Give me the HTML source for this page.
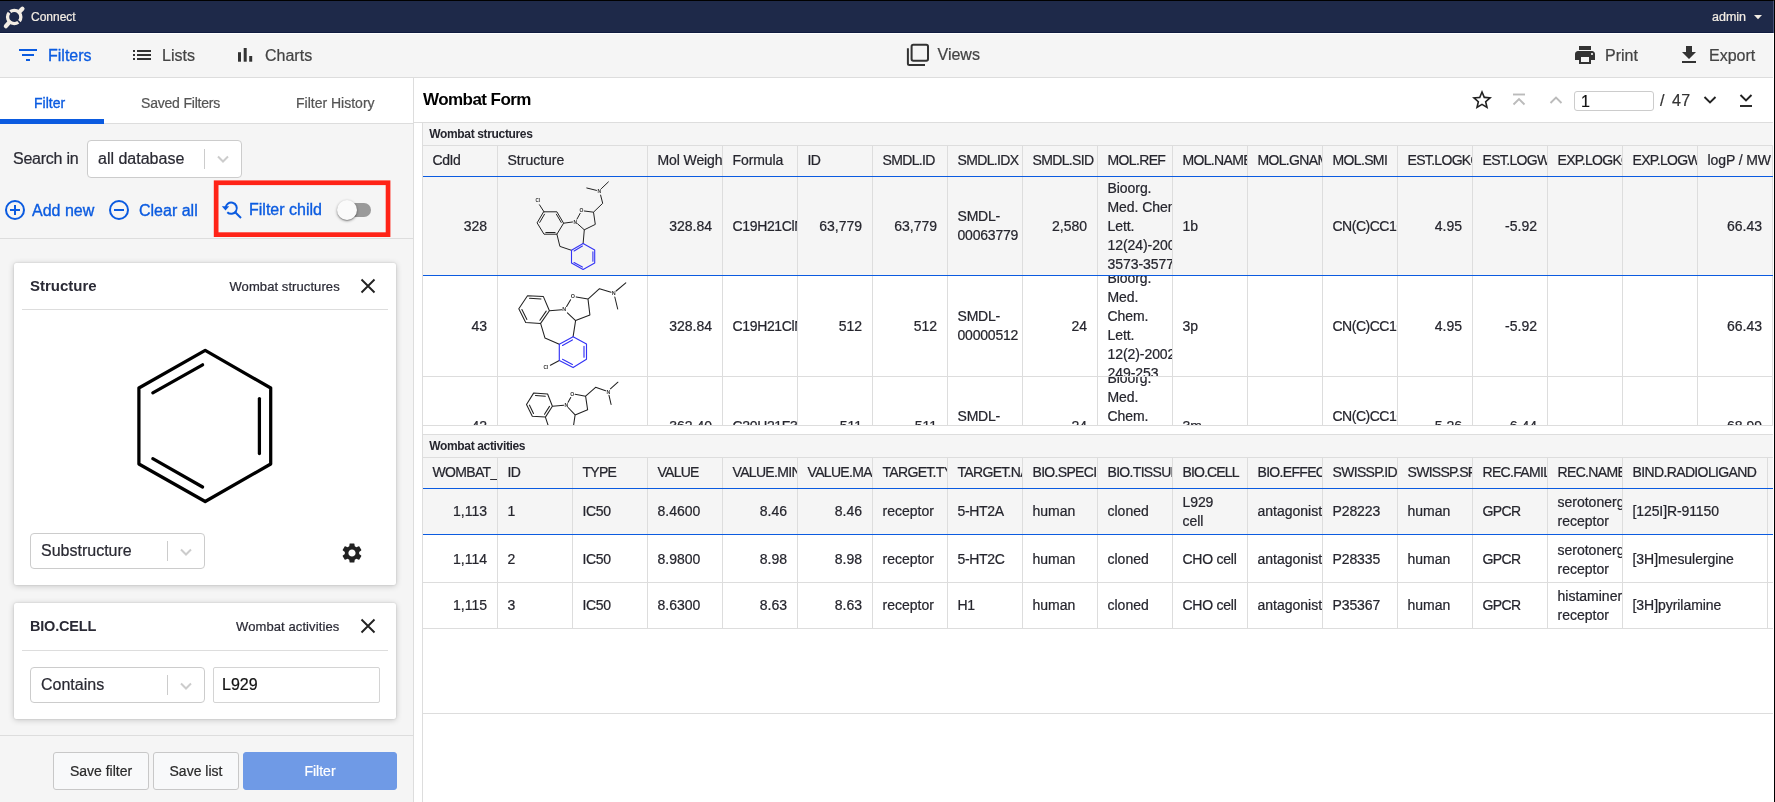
<!DOCTYPE html>
<html>
<head>
<meta charset="utf-8">
<title>Connect</title>
<style>
*{box-sizing:border-box;}
html,body{margin:0;padding:0;}
body{width:1775px;height:802px;overflow:hidden;background:#fff;font-family:"Liberation Sans",sans-serif;color:#26262e;position:relative;}
#wrap{position:absolute;left:0;top:0;width:1775px;height:802px;will-change:transform;-webkit-text-stroke-width:0.22px;}
.abs{position:absolute;}
#nav{left:0;top:0;width:1773px;height:33px;background:#1e2949;border-top:1px solid #000;border-bottom:1px solid #101c40;}
#nav .brand{left:31px;top:8px;font-size:12px;color:#f3ede4;line-height:16px;}
#nav .user{left:1712px;top:8px;font-size:12.5px;color:#f3ede4;line-height:16px;}
#toolbar{left:0;top:33px;width:1773px;height:45px;background:#f5f5f5;border-bottom:1px solid #ddd;box-shadow:inset 0 1px 0 #fff;}
.tb{font-size:16px;line-height:20px;color:#444;top:13px;white-space:nowrap;}
.tb.act{color:#0b5be0;-webkit-text-stroke-width:0.3px;}
#left{left:0;top:78px;width:414px;height:724px;background:#f5f5f5;border-right:1px solid #ddd;}
#tabs{left:0;top:0;width:413px;height:46px;background:#fff;border-bottom:1px solid #ddd;}
.tab{top:16px;font-size:14px;line-height:18px;color:#555;white-space:nowrap;}
.tab.act{color:#0b5be0;-webkit-text-stroke-width:0.35px;}
.sel{background:#fff;border:1px solid #ccc;border-radius:4px;}
.sel .sep{position:absolute;width:1px;background:#ccc;}
.sel .tx{position:absolute;font-size:16px;line-height:20px;color:#2a2a33;white-space:nowrap;}
.link{font-size:16px;line-height:20px;color:#0b5be0;white-space:nowrap;-webkit-text-stroke-width:0.35px;}
.card{background:#fff;border-radius:2px;box-shadow:0 1px 6px rgba(0,0,0,.2),0 0 1.5px rgba(0,0,0,.2);}
.card .ttl{-webkit-text-stroke-width:0;position:absolute;left:16px;font-weight:bold;font-size:15px;line-height:20px;color:#2a2a35;white-space:nowrap;}
.card .sub{position:absolute;font-size:13px;line-height:18px;color:#2a2a35;white-space:nowrap;}
.card .div{position:absolute;left:8px;right:8px;height:1px;background:#ddd;}
.btn{border:1px solid #c8c8c8;border-radius:3px;background:#f8f9fa;font-size:14px;line-height:36px;text-align:center;color:#2a2a2a;height:38px;white-space:nowrap;}
#right{left:414px;top:78px;width:1359px;height:724px;background:#fff;}
.band{-webkit-text-stroke-width:0;position:absolute;left:422px;width:1351px;background:#f5f5f5;font-weight:bold;font-size:12px;color:#26262e;line-height:22px;padding-left:6.3px;border-left:1px solid #ddd;border-bottom:1px solid #ddd;letter-spacing:-0.35px;white-space:nowrap;}
.grid{position:absolute;left:422px;width:1351px;overflow:hidden;font-size:14px;color:#26262e;}
.hrow{position:absolute;left:0;top:0;width:1351px;height:31px;background:#f5f5f5;border-bottom:1px solid #0b5be0;}
.hc{position:absolute;top:0;height:30px;line-height:29px;padding-left:9.5px;white-space:nowrap;overflow:hidden;border-left:1px solid #ddd;font-size:14px;color:#26262e;}
.row{position:absolute;left:0;width:1351px;border-bottom:1px solid #ddd;background:#fff;overflow:hidden;}
.row.selr{background:#f5f5f5;border-bottom:1px solid #0b5be0;}
.c{position:absolute;top:0;bottom:0;border-left:1px solid #ddd;padding:0 10px 0 9.5px;overflow:hidden;display:flex;align-items:center;line-height:19px;font-size:14px;white-space:nowrap;}
.c.r{justify-content:flex-end;text-align:right;}
.c>div{flex:none;}
</style>
</head>
<body>
<div id="wrap">

<div id="nav" class="abs">
  <svg class="abs" style="left:2px;top:2px" width="26" height="28" viewBox="0 0 26 28">
    <g fill="none" stroke="#f3ede4" stroke-linecap="round">
      <circle cx="12.2" cy="14" r="6.65" stroke-width="3.3" stroke-dasharray="19.29 1.6" stroke-dashoffset="14.87" stroke-linecap="butt"/>
      <path d="M17.4 8.8 L20.4 5.7" stroke-width="4.3"/>
      <path d="M7.2 19.4 L3.9 23.1" stroke-width="4.3"/>
    </g>
  </svg>
  <div class="abs brand">Connect</div>
  <div class="abs user">admin</div>
  <svg class="abs" style="left:1753px;top:13px" width="10" height="6" viewBox="0 0 10 6"><path d="M1 1 L9 1 L5 5.2 Z" fill="#f3ede4"/></svg>
</div>
<div id="toolbar" class="abs">
  <svg class="abs" style="left:18px;top:13px" width="20" height="18" viewBox="0 0 20 18"><g fill="#0b5be0"><rect x="1" y="3" width="18" height="2"/><rect x="4" y="8" width="12" height="2"/><rect x="8" y="13" width="4" height="2"/></g></svg>
  <div class="abs tb act" style="left:48px;">Filters</div>
  <svg class="abs" style="left:132px;top:13px" width="20" height="18" viewBox="0 0 20 18"><g fill="#333"><rect x="1" y="4" width="2" height="2"/><rect x="1" y="8" width="2" height="2"/><rect x="1" y="12" width="2" height="2"/><rect x="5" y="4" width="14" height="2"/><rect x="5" y="8" width="14" height="2"/><rect x="5" y="12" width="14" height="2"/></g></svg>
  <div class="abs tb" style="left:162px;">Lists</div>
  <svg class="abs" style="left:236px;top:13px" width="18" height="18" viewBox="0 0 18 18"><g fill="#333"><rect x="2" y="6.2" width="3" height="9.5"/><rect x="7.7" y="2" width="3" height="13.7"/><rect x="13.2" y="10" width="3" height="5.7"/></g></svg>
  <div class="abs tb" style="left:265px;">Charts</div>
  <svg class="abs" style="left:905px;top:9px" width="26" height="26" viewBox="0 0 26 26"><g fill="none" stroke="#333" stroke-width="2"><rect x="6.6" y="2.7" width="16.4" height="16" rx="1.7"/><path d="M2.9 6.2 V21.6 a1.5 1.5 0 0 0 1.5 1.5 H20"/></g></svg>
  <div class="abs tb" style="left:937.5px;top:12px">Views</div>
  <svg class="abs" style="left:1573px;top:10px" width="24" height="24" viewBox="0 0 24 24"><path fill="#333" d="M19 8H5c-1.66 0-3 1.34-3 3v6h4v4h12v-4h4v-6c0-1.66-1.34-3-3-3zm-3 11H8v-5h8v5zm3-7c-.55 0-1-.45-1-1s.45-1 1-1 1 .45 1 1-.45 1-1 1zm-1-9H6v4h12V3z"/></svg>
  <div class="abs tb" style="left:1605px;">Print</div>
  <svg class="abs" style="left:1677px;top:10px" width="24" height="24" viewBox="0 0 24 24"><path fill="#333" d="M19 9h-4V3H9v6H5l7 7 7-7zM5 18v2h14v-2H5z"/></svg>
  <div class="abs tb" style="left:1709px;">Export</div>
</div><div id="left" class="abs">
  <div id="tabs" class="abs">
    <div class="abs tab act" style="left:34px;">Filter</div>
    <div class="abs tab" style="left:141px;letter-spacing:-0.2px">Saved Filters</div>
    <div class="abs tab" style="left:296px;">Filter History</div>
    <div class="abs" style="left:0;top:41px;width:104px;height:5px;background:#0b5be0;"></div>
  </div><div class="abs" style="left:13px;top:71px;font-size:16px;line-height:20px;color:#2a2a33;white-space:nowrap;letter-spacing:-0.25px">Search in</div><div class="abs sel" style="left:87px;top:62px;width:155px;height:38px;"><div class="tx" style="left:10px;top:8px">all database</div><div class="sep" style="left:116px;top:8px;height:20px"></div><svg class="abs" style="left:128px;top:13px" width="14" height="10" viewBox="0 0 14 10"><path d="M2 2.5 L7 7.5 L12 2.5" fill="none" stroke="#ccc" stroke-width="2"/></svg></div><svg class="abs" style="left:4px;top:121px" width="22" height="22" viewBox="0 0 22 22"><circle cx="11" cy="11" r="9" fill="none" stroke="#0b5be0" stroke-width="2"/><path d="M6 11 H16 M11 6 V16" stroke="#0b5be0" stroke-width="2" fill="none"/></svg><div class="abs link" style="left:32px;top:123px">Add new</div><svg class="abs" style="left:108px;top:121px" width="22" height="22" viewBox="0 0 22 22"><circle cx="11" cy="11" r="9" fill="none" stroke="#0b5be0" stroke-width="2"/><path d="M6 11 H16" stroke="#0b5be0" stroke-width="2" fill="none"/></svg><div class="abs link" style="left:139px;top:123px">Clear all</div><svg class="abs" style="left:210px;top:100px" width="190" height="64" viewBox="0 0 190 64"><rect x="6.15" y="4.75" width="171.9" height="51.9" fill="none" stroke="#ff2317" stroke-width="4.7"/></svg><svg class="abs" style="left:221px;top:122px" width="22" height="20" viewBox="0 0 22 20"><g fill="none" stroke="#0b5be0" stroke-width="2"><path d="M4.6 8.2 A5.6 5.6 0 1 1 6.3 12.2"/><path d="M14.2 12.2 L20 18"/></g><path d="M0.8 6.2 L8.2 6.2 L4.5 10.4 Z" fill="#0b5be0"/></svg><div class="abs link" style="left:249px;top:122px">Filter child</div><div class="abs" style="left:340px;top:125px;width:31px;height:14px;border-radius:7px;background:#9a9a9a"></div><div class="abs" style="left:337px;top:122px;width:20px;height:20px;border-radius:10px;background:#fafafa;box-shadow:0 1px 3px rgba(0,0,0,.4),0 1px 1px rgba(0,0,0,.2)"></div><div class="abs" style="left:0;top:160px;width:413px;height:1px;background:#ddd"></div><div class="abs card" style="left:14px;top:185px;width:382px;height:322px"><div class="ttl" style="top:13px">Structure</div><div class="sub" style="left:215.5px;top:15px;letter-spacing:0.08px">Wombat structures</div><svg class="abs" style="left:346px;top:14.5px" width="16" height="16" viewBox="0 0 16 16"><path d="M1.5 1.5 L14.5 14.5 M14.5 1.5 L1.5 14.5" fill="none" stroke="#222" stroke-width="1.9"/></svg><div class="div" style="top:46px"></div><svg class="abs" style="left:0;top:0" width="382" height="322" viewBox="0 0 382 322"><g fill="none" stroke="#000" stroke-width="3.25" stroke-linejoin="round" stroke-linecap="round"><path d="M191.2 87.4 L256.7 125 L256.7 201 L191.2 238.5 L124.9 201 L124.9 125 Z"/><path d="M138.8 129.8 L188.6 101.8"/><path d="M245.4 135.5 L245.4 190.5"/><path d="M138.8 195.7 L188.6 224"/></g></svg><div class="abs sel" style="left:16px;top:270px;width:175px;height:36px;"><div class="tx" style="left:10px;top:7px">Substructure</div><div class="sep" style="left:136px;top:7px;height:20px"></div><svg class="abs" style="left:148px;top:13px" width="14" height="10" viewBox="0 0 14 10"><path d="M2 2.5 L7 7.5 L12 2.5" fill="none" stroke="#ccc" stroke-width="2"/></svg></div><svg class="abs" style="left:326px;top:278px" width="24" height="24" viewBox="0 0 24 24"><path fill="#222" d="M19.14 12.94c.04-.3.06-.61.06-.94 0-.32-.02-.64-.07-.94l2.03-1.58a.49.49 0 0 0 .12-.61l-1.92-3.32a.488.488 0 0 0-.59-.22l-2.39.96c-.5-.38-1.03-.7-1.62-.94l-.36-2.54a.484.484 0 0 0-.48-.41h-3.84c-.24 0-.43.17-.47.41l-.36 2.54c-.59.24-1.13.57-1.62.94l-2.39-.96c-.22-.08-.47 0-.59.22L2.74 8.87c-.12.21-.08.47.12.61l2.03 1.58c-.05.3-.09.63-.09.94s.02.64.07.94l-2.03 1.58a.49.49 0 0 0-.12.61l1.92 3.32c.12.22.37.29.59.22l2.39-.96c.5.38 1.03.7 1.62.94l.36 2.54c.05.24.24.41.48.41h3.84c.24 0 .44-.17.47-.41l.36-2.54c.59-.24 1.13-.56 1.62-.94l2.39.96c.22.08.47 0 .59-.22l1.92-3.32c.12-.22.07-.47-.12-.61l-2.01-1.58zM12 15.6c-1.98 0-3.6-1.62-3.6-3.6s1.62-3.6 3.6-3.6 3.6 1.62 3.6 3.6-1.62 3.6-3.6 3.6z"/></svg></div><div class="abs card" style="left:14px;top:525px;width:382px;height:116px"><div class="ttl" style="top:13px;font-size:14.5px;letter-spacing:-0.2px">BIO.CELL</div><div class="sub" style="left:222px;top:15px;letter-spacing:0.1px">Wombat activities</div><svg class="abs" style="left:346px;top:14.5px" width="16" height="16" viewBox="0 0 16 16"><path d="M1.5 1.5 L14.5 14.5 M14.5 1.5 L1.5 14.5" fill="none" stroke="#222" stroke-width="1.9"/></svg><div class="div" style="top:47px"></div><div class="abs sel" style="left:16px;top:64px;width:175px;height:36px;"><div class="tx" style="left:10px;top:7px">Contains</div><div class="sep" style="left:136px;top:7px;height:20px"></div><svg class="abs" style="left:148px;top:12.5px" width="14" height="10" viewBox="0 0 14 10"><path d="M2 2.5 L7 7.5 L12 2.5" fill="none" stroke="#ccc" stroke-width="2"/></svg></div><div class="abs" style="left:199px;top:64px;width:167px;height:36px;background:#fff;border:1px solid #d4d4d4;border-radius:2px"><div class="abs" style="left:8px;top:7px;font-size:16px;line-height:20px;color:#111">L929</div></div></div><div class="abs" style="left:0;top:657px;width:413px;height:1px;background:#ddd"></div><div class="abs btn" style="left:53px;top:674px;width:96px">Save filter</div><div class="abs btn" style="left:153px;top:674px;width:86px">Save list</div><div class="abs btn" style="left:243px;top:674px;width:154px;background:#6f9ae6;border-color:#6f9ae6;color:#fff">Filter</div></div><div id="right" class="abs"><div class="abs" style="left:9px;top:11px;-webkit-text-stroke-width:0;font-size:17px;font-weight:bold;line-height:22px;color:#000;letter-spacing:-0.55px;white-space:nowrap">Wombat Form</div><svg class="abs" style="left:1056px;top:10px" width="24" height="24" viewBox="0 0 24 24"><path fill="#222" d="M22 9.24l-7.19-.62L12 2 9.19 8.63 2 9.24l5.46 4.73L5.82 21 12 17.27 18.18 21l-1.63-7.03L22 9.24zM12 15.4l-3.76 2.27 1-4.28-3.32-2.88 4.38-.38L12 6.1l1.71 4.04 4.38.38-3.32 2.88 1 4.28L12 15.4z"/></svg><svg class="abs" style="left:1096px;top:13px" width="18" height="18" viewBox="0 0 18 18"><g fill="none" stroke="#bbb" stroke-width="1.9"><path d="M3 3.5 H15"/><path d="M3.5 13.5 L9 8 L14.5 13.5"/></g></svg><svg class="abs" style="left:1133px;top:15px" width="18" height="14" viewBox="0 0 18 14"><path d="M3.5 10 L9 4.5 L14.5 10" fill="none" stroke="#bbb" stroke-width="1.9"/></svg><div class="abs" style="left:1160px;top:13px;width:80px;height:20px;border:1px solid #ccc;border-radius:3px;background:#fff"><div class="abs" style="left:6px;top:0px;font-size:16px;line-height:19px;color:#111">1</div></div><div class="abs" style="left:1246px;top:12px;font-size:16px;line-height:22px;color:#333;white-space:pre;letter-spacing:0.3px;word-spacing:2.5px">/ 47</div><svg class="abs" style="left:1287px;top:15px" width="18" height="14" viewBox="0 0 18 14"><path d="M3.5 4 L9 9.5 L14.5 4" fill="none" stroke="#222" stroke-width="1.9"/></svg><svg class="abs" style="left:1323px;top:13px" width="18" height="18" viewBox="0 0 18 18"><g fill="none" stroke="#222" stroke-width="1.9"><path d="M3.5 4 L9 9.5 L14.5 4"/><path d="M3 15 H15"/></g></svg><div class="abs" style="left:0;top:44px;width:1359px;height:1px;background:#ddd"></div></div><div class="band" style="top:123px;height:23px">Wombat structures</div><div class="grid" style="top:146px;height:280px;border-left:1px solid #ddd;border-bottom:1px solid #ddd"><div class="hrow" style="left:-1px"><div class="hc" style="left:0px;width:75px;letter-spacing:-0.4px">CdId</div><div class="hc" style="left:75px;width:150px;letter-spacing:0px">Structure</div><div class="hc" style="left:225px;width:75px;letter-spacing:-0.1px">Mol Weight</div><div class="hc" style="left:300px;width:75px;letter-spacing:-0.1px">Formula</div><div class="hc" style="left:375px;width:75px;letter-spacing:-0.75px">ID</div><div class="hc" style="left:450px;width:75px;letter-spacing:-0.64px">SMDL.ID</div><div class="hc" style="left:525px;width:75px;letter-spacing:-0.66px">SMDL.IDX</div><div class="hc" style="left:600px;width:75px;letter-spacing:-0.66px">SMDL.SID</div><div class="hc" style="left:675px;width:75px;letter-spacing:-0.64px">MOL.REF</div><div class="hc" style="left:750px;width:75px;letter-spacing:-0.66px">MOL.NAME</div><div class="hc" style="left:825px;width:75px;letter-spacing:-0.67px">MOL.GNAME</div><div class="hc" style="left:900px;width:75px;letter-spacing:-0.64px">MOL.SMI</div><div class="hc" style="left:975px;width:75px;letter-spacing:-0.68px">EST.LOGKOW</div><div class="hc" style="left:1050px;width:75px;letter-spacing:-0.67px">EST.LOGWS</div><div class="hc" style="left:1125px;width:75px;letter-spacing:-0.68px">EXP.LOGKOW</div><div class="hc" style="left:1200px;width:75px;letter-spacing:-0.67px">EXP.LOGWS</div><div class="hc" style="left:1275px;width:75px;letter-spacing:-0.1px">logP / MW</div><div class="hc" style="left:1350px;width:2px;padding:0"></div></div><div class="row selr" style="left:-1px;top:31px;height:99px"><div class="c r" style="left:0px;width:75px;"><div>328</div></div><div class="c" style="left:75px;width:150px;padding:0"><div style="position:absolute;left:-1px;top:0;width:150px;height:100px"><svg class="mol" style="position:absolute;left:0;top:0;" width="150" height="98" viewBox="0 0 150 98"><path d="M47.0 34.8 L59.9 34.8 L66.6 46.2 L59.9 57.2 L47.0 57.2 L40.3 46.2 Z M59.4 37.2 L64.2 45.4 M58.1 55.5 L48.8 55.5 M42.7 45.4 L47.5 37.2 M89.8 11.0 L99.5 13.4 M111.4 4.9 L104.4 11.6 M103.6 18.1 L105.7 26.3 L96.5 35.2 M87.3 34.0 L96.5 35.2 L98.3 47.4 L87.3 52.8 L80.6 46.8 M80.0 42.1 L83.1 36.4 M75.5 45.0 L66.6 46.2 M42.5 27.8 L47.0 34.8 M59.9 57.2 L62.9 69.4 L74.5 73.3 M87.3 52.8 L86.1 66.6" fill="none" stroke="#222" stroke-width="1.00" stroke-linecap="round" stroke-linejoin="round"/><path d="M86.1 66.6 L97.7 73.0 L97.7 86.1 L86.1 92.5 L74.5 86.1 L74.5 73.3 Z M95.9 74.8 L95.9 84.3 M85.4 90.1 L77.0 85.5 M77.1 73.9 L85.4 69.1" fill="none" stroke="#3434f5" stroke-width="1.10" stroke-linecap="round" stroke-linejoin="round"/><text x="102.4" y="16.4" font-family="Liberation Sans" font-size="5" font-weight="bold" fill="#333" text-anchor="middle">N</text><text x="84.5" y="35.2" font-family="Liberation Sans" font-size="5" font-weight="bold" fill="#333" text-anchor="middle">O</text><text x="78.2" y="46.6" font-family="Liberation Sans" font-size="5" font-weight="bold" fill="#333" text-anchor="middle">N</text><text x="40.9" y="25.3" font-family="Liberation Sans" font-size="4.6" font-weight="bold" fill="#333" text-anchor="middle">Cl</text></svg></div></div><div class="c r" style="left:225px;width:75px;"><div>328.84</div></div><div class="c" style="left:300px;width:75px;letter-spacing:-0.3px;letter-spacing:-0.35px;"><div>C19H21ClN2O</div></div><div class="c r" style="left:375px;width:75px;"><div>63,779</div></div><div class="c r" style="left:450px;width:75px;"><div>63,779</div></div><div class="c" style="left:525px;width:75px;letter-spacing:-0.2px;"><div>SMDL-<br>00063779</div></div><div class="c r" style="left:600px;width:75px;"><div>2,580</div></div><div class="c" style="left:675px;width:75px;letter-spacing:-0.06px;"><div>Bioorg.<br>Med. Chem.<br>Lett.<br>12(24)-2002<br>3573-3577</div></div><div class="c" style="left:750px;width:75px;"><div>1b</div></div><div class="c" style="left:825px;width:75px;"><div></div></div><div class="c" style="left:900px;width:75px;letter-spacing:-0.38px;letter-spacing:-0.5px;"><div>CN(C)CC1CC2C3=CC=CC=C3</div></div><div class="c r" style="left:975px;width:75px;"><div>4.95</div></div><div class="c r" style="left:1050px;width:75px;"><div>-5.92</div></div><div class="c r" style="left:1125px;width:75px;"><div></div></div><div class="c r" style="left:1200px;width:75px;"><div></div></div><div class="c r" style="left:1275px;width:75px;"><div>66.43</div></div><div class="c" style="left:1350px;width:2px;padding:0"></div></div><div class="row" style="left:-1px;top:130px;height:101px"><div class="c r" style="left:0px;width:75px;"><div>43</div></div><div class="c" style="left:75px;width:150px;padding:0"><div style="position:absolute;left:-1px;top:0;width:150px;height:100px"><svg class="mol" style="position:absolute;left:0;top:0;" width="150" height="100" viewBox="0 0 150 100"><path d="M30.5 19.7 L46.4 20.6 L52.4 34.7 L43.6 47.4 L28.7 46.4 L21.8 32.7 Z M32.5 22.2 L44.0 22.9 M49.2 35.1 L42.9 44.3 M29.9 43.4 L24.9 33.5 M52.4 34.7 L64.8 33.7 M69.6 30.5 L73.6 23.7 M79.2 20.9 L91.0 23.1 L92.9 38.9 L78.6 44.6 L70.4 36.8 M78.6 44.6 L76.1 60.7 M91.0 23.1 L102.5 12.7 L114.1 16.2 M119.1 15.0 L128.8 6.9 M117.8 21.0 L120.7 33.0 M43.6 47.4 L48.0 62.1 L62.3 68.3 M62.3 84.5 L53.4 89.2" fill="none" stroke="#222" stroke-width="1.05" stroke-linecap="round" stroke-linejoin="round"/><path d="M76.1 60.7 L89.5 68.0 L89.5 83.3 L76.1 91.6 L62.3 84.5 L62.3 68.3 Z M87.0 70.2 L87.0 81.2 M75.4 88.4 L65.5 83.3 M65.5 69.4 L75.4 63.9" fill="none" stroke="#3434f5" stroke-width="1.15" stroke-linecap="round" stroke-linejoin="round"/><text x="67.3" y="35.1" font-family="Liberation Sans" font-size="5.4" font-weight="bold" fill="#333" text-anchor="middle">N</text><text x="75.8" y="22.0" font-family="Liberation Sans" font-size="5.4" font-weight="bold" fill="#333" text-anchor="middle">O</text><text x="116.6" y="18.9" font-family="Liberation Sans" font-size="5.4" font-weight="bold" fill="#333" text-anchor="middle">N</text><text x="49.0" y="93.0" font-family="Liberation Sans" font-size="4.8" font-weight="bold" fill="#333" text-anchor="middle">Cl</text></svg></div></div><div class="c r" style="left:225px;width:75px;"><div>328.84</div></div><div class="c" style="left:300px;width:75px;letter-spacing:-0.3px;letter-spacing:-0.35px;"><div>C19H21ClN2O</div></div><div class="c r" style="left:375px;width:75px;"><div>512</div></div><div class="c r" style="left:450px;width:75px;"><div>512</div></div><div class="c" style="left:525px;width:75px;letter-spacing:-0.2px;"><div>SMDL-<br>00000512</div></div><div class="c r" style="left:600px;width:75px;"><div>24</div></div><div class="c" style="left:675px;width:75px;letter-spacing:-0.07px;"><div>Bioorg.<br>Med.<br>Chem.<br>Lett.<br>12(2)-2002<br>249-253</div></div><div class="c" style="left:750px;width:75px;"><div>3p</div></div><div class="c" style="left:825px;width:75px;"><div></div></div><div class="c" style="left:900px;width:75px;letter-spacing:-0.38px;letter-spacing:-0.5px;"><div>CN(C)CC1CC2C3=CC=CC=C3</div></div><div class="c r" style="left:975px;width:75px;"><div>4.95</div></div><div class="c r" style="left:1050px;width:75px;"><div>-5.92</div></div><div class="c r" style="left:1125px;width:75px;"><div></div></div><div class="c r" style="left:1200px;width:75px;"><div></div></div><div class="c r" style="left:1275px;width:75px;"><div>66.43</div></div><div class="c" style="left:1350px;width:2px;padding:0"></div></div><div class="row" style="left:-1px;top:231px;height:99px"><div class="c r" style="left:0px;width:75px;"><div>42</div></div><div class="c" style="left:75px;width:150px;padding:0"><div style="position:absolute;left:-1px;top:0;width:150px;height:100px"><svg class="mol" style="position:absolute;left:0;top:0;" width="150" height="60" viewBox="0 0 150 60"><path d="M36.6 16.1 L50.6 17.0 L55.4 29.2 L48.4 40.1 L35.3 39.2 L29.5 27.5 Z M38.4 18.5 L48.4 19.2 M52.5 29.4 L47.5 37.3 M36.5 36.5 L32.4 28.1 M55.4 29.2 L66.8 28.2 M71.1 25.3 L73.7 20.5 M78.1 17.3 L88.6 19.2 L90.6 32.7 L78.1 37.9 L71.1 30.5 M78.1 37.9 L76.2 51.0 M48.4 40.1 L52.0 51.0 M88.6 19.2 L98.6 10.3 L108.6 13.8 M113.4 11.8 L120.9 5.2 M112.0 18.3 L114.1 27.5" fill="none" stroke="#222" stroke-width="1.05" stroke-linecap="round" stroke-linejoin="round"/><text x="69.4" y="30.4" font-family="Liberation Sans" font-size="5.2" font-weight="bold" fill="#333" text-anchor="middle">N</text><text x="75.3" y="18.5" font-family="Liberation Sans" font-size="5.2" font-weight="bold" fill="#333" text-anchor="middle">O</text><text x="111.4" y="16.5" font-family="Liberation Sans" font-size="5.2" font-weight="bold" fill="#333" text-anchor="middle">N</text></svg></div></div><div class="c r" style="left:225px;width:75px;"><div>362.40</div></div><div class="c" style="left:300px;width:75px;letter-spacing:-0.3px;letter-spacing:-0.35px;"><div>C20H21F3N2O</div></div><div class="c r" style="left:375px;width:75px;"><div>511</div></div><div class="c r" style="left:450px;width:75px;"><div>511</div></div><div class="c" style="left:525px;width:75px;letter-spacing:-0.2px;"><div>SMDL-<br>00000511</div></div><div class="c r" style="left:600px;width:75px;"><div>24</div></div><div class="c" style="left:675px;width:75px;letter-spacing:-0.07px;"><div>Bioorg.<br>Med.<br>Chem.<br>Lett.<br>12(2)-2002<br>249-253</div></div><div class="c" style="left:750px;width:75px;"><div>3m</div></div><div class="c" style="left:825px;width:75px;"><div></div></div><div class="c" style="left:900px;width:75px;letter-spacing:-0.38px;letter-spacing:-0.5px;"><div>CN(C)CC1CC2C3=CC=CC<br>=C3</div></div><div class="c r" style="left:975px;width:75px;"><div>5.26</div></div><div class="c r" style="left:1050px;width:75px;"><div>-6.44</div></div><div class="c r" style="left:1125px;width:75px;"><div></div></div><div class="c r" style="left:1200px;width:75px;"><div></div></div><div class="c r" style="left:1275px;width:75px;"><div>68.99</div></div><div class="c" style="left:1350px;width:2px;padding:0"></div></div></div><div class="abs" style="left:422px;top:434px;width:1351px;height:1px;background:#ddd"></div><div class="band" style="top:435px;height:23px">Wombat activities</div><div class="grid" style="top:458px;height:256px;border-left:1px solid #ddd;border-bottom:1px solid #ddd"><div class="hrow" style="left:-1px"><div class="hc" style="left:0px;width:75px;letter-spacing:-0.67px">WOMBAT_ID</div><div class="hc" style="left:75px;width:75px;letter-spacing:-0.75px">ID</div><div class="hc" style="left:150px;width:75px;letter-spacing:-0.75px">TYPE</div><div class="hc" style="left:225px;width:75px;letter-spacing:-0.75px">VALUE</div><div class="hc" style="left:300px;width:75px;letter-spacing:-0.67px">VALUE.MIN</div><div class="hc" style="left:375px;width:75px;letter-spacing:-0.67px">VALUE.MAX</div><div class="hc" style="left:450px;width:75px;letter-spacing:-0.68px">TARGET.TYPE</div><div class="hc" style="left:525px;width:75px;letter-spacing:-0.68px">TARGET.NAME</div><div class="hc" style="left:600px;width:75px;letter-spacing:-0.68px">BIO.SPECIES</div><div class="hc" style="left:675px;width:75px;letter-spacing:-0.68px">BIO.TISSUE</div><div class="hc" style="left:750px;width:75px;letter-spacing:-0.85px">BIO.CELL</div><div class="hc" style="left:825px;width:75px;letter-spacing:-0.68px">BIO.EFFECT</div><div class="hc" style="left:900px;width:75px;letter-spacing:-0.67px">SWISSP.ID</div><div class="hc" style="left:975px;width:75px;letter-spacing:-0.7px">SWISSP.SPECIES</div><div class="hc" style="left:1050px;width:75px;letter-spacing:-0.68px">REC.FAMILY</div><div class="hc" style="left:1125px;width:75px;letter-spacing:-0.66px">REC.NAME</div><div class="hc" style="left:1200px;width:145px;letter-spacing:-0.63px">BIND.RADIOLIGAND</div><div class="hc" style="left:1345px;width:6px;padding:0"></div></div><div class="row selr" style="left:-1px;top:31px;height:46px"><div class="c r" style="left:0px;width:75px;"><div>1,113</div></div><div class="c" style="left:75px;width:75px;"><div>1</div></div><div class="c" style="left:150px;width:75px;letter-spacing:-0.33px;"><div>IC50</div></div><div class="c" style="left:225px;width:75px;"><div>8.4600</div></div><div class="c r" style="left:300px;width:75px;"><div>8.46</div></div><div class="c r" style="left:375px;width:75px;"><div>8.46</div></div><div class="c" style="left:450px;width:75px;"><div>receptor</div></div><div class="c" style="left:525px;width:75px;letter-spacing:-0.33px;"><div>5-HT2A</div></div><div class="c" style="left:600px;width:75px;"><div>human</div></div><div class="c" style="left:675px;width:75px;"><div>cloned</div></div><div class="c" style="left:750px;width:75px;letter-spacing:-0.08px;"><div>L929<br>cell</div></div><div class="c" style="left:825px;width:75px;"><div>antagonist</div></div><div class="c" style="left:900px;width:75px;letter-spacing:-0.11px;"><div>P28223</div></div><div class="c" style="left:975px;width:75px;"><div>human</div></div><div class="c" style="left:1050px;width:75px;letter-spacing:-0.65px;"><div>GPCR</div></div><div class="c" style="left:1125px;width:75px;"><div>serotonergic<br>receptor</div></div><div class="c" style="left:1200px;width:145px;letter-spacing:-0.1px;"><div>[125I]R-91150</div></div><div class="c" style="left:1345px;width:6px;padding:0"></div></div><div class="row" style="left:-1px;top:77px;height:48px"><div class="c r" style="left:0px;width:75px;padding-top:2px;"><div>1,114</div></div><div class="c" style="left:75px;width:75px;padding-top:2px;"><div>2</div></div><div class="c" style="left:150px;width:75px;letter-spacing:-0.33px;padding-top:2px;"><div>IC50</div></div><div class="c" style="left:225px;width:75px;padding-top:2px;"><div>8.9800</div></div><div class="c r" style="left:300px;width:75px;padding-top:2px;"><div>8.98</div></div><div class="c r" style="left:375px;width:75px;padding-top:2px;"><div>8.98</div></div><div class="c" style="left:450px;width:75px;padding-top:2px;"><div>receptor</div></div><div class="c" style="left:525px;width:75px;letter-spacing:-0.33px;padding-top:2px;"><div>5-HT2C</div></div><div class="c" style="left:600px;width:75px;padding-top:2px;"><div>human</div></div><div class="c" style="left:675px;width:75px;padding-top:2px;"><div>cloned</div></div><div class="c" style="left:750px;width:75px;letter-spacing:-0.24px;padding-top:2px;"><div>CHO cell</div></div><div class="c" style="left:825px;width:75px;padding-top:2px;"><div>antagonist</div></div><div class="c" style="left:900px;width:75px;letter-spacing:-0.11px;padding-top:2px;"><div>P28335</div></div><div class="c" style="left:975px;width:75px;padding-top:2px;"><div>human</div></div><div class="c" style="left:1050px;width:75px;letter-spacing:-0.65px;padding-top:2px;"><div>GPCR</div></div><div class="c" style="left:1125px;width:75px;padding-top:2px;"><div>serotonergic<br>receptor</div></div><div class="c" style="left:1200px;width:145px;letter-spacing:-0.04px;padding-top:2px;"><div>[3H]mesulergine</div></div><div class="c" style="left:1345px;width:6px;padding:0"></div></div><div class="row" style="left:-1px;top:125px;height:46px"><div class="c r" style="left:0px;width:75px;"><div>1,115</div></div><div class="c" style="left:75px;width:75px;"><div>3</div></div><div class="c" style="left:150px;width:75px;letter-spacing:-0.33px;"><div>IC50</div></div><div class="c" style="left:225px;width:75px;"><div>8.6300</div></div><div class="c r" style="left:300px;width:75px;"><div>8.63</div></div><div class="c r" style="left:375px;width:75px;"><div>8.63</div></div><div class="c" style="left:450px;width:75px;"><div>receptor</div></div><div class="c" style="left:525px;width:75px;letter-spacing:-0.33px;"><div>H1</div></div><div class="c" style="left:600px;width:75px;"><div>human</div></div><div class="c" style="left:675px;width:75px;"><div>cloned</div></div><div class="c" style="left:750px;width:75px;letter-spacing:-0.24px;"><div>CHO cell</div></div><div class="c" style="left:825px;width:75px;"><div>antagonist</div></div><div class="c" style="left:900px;width:75px;letter-spacing:-0.11px;"><div>P35367</div></div><div class="c" style="left:975px;width:75px;"><div>human</div></div><div class="c" style="left:1050px;width:75px;letter-spacing:-0.65px;"><div>GPCR</div></div><div class="c" style="left:1125px;width:75px;"><div>histaminergic<br>receptor</div></div><div class="c" style="left:1200px;width:145px;letter-spacing:-0.05px;"><div>[3H]pyrilamine</div></div><div class="c" style="left:1345px;width:6px;padding:0"></div></div></div>
<div class="abs" style="left:422px;top:123px;width:1px;height:679px;background:#ddd"></div>
<div class="abs" style="left:1773px;top:0;width:1px;height:33px;background:#48537a;border-top:1px solid #222"></div><div class="abs" style="left:1774px;top:0;width:1px;height:802px;background:#000;"></div>
</div>
</body>
</html>
